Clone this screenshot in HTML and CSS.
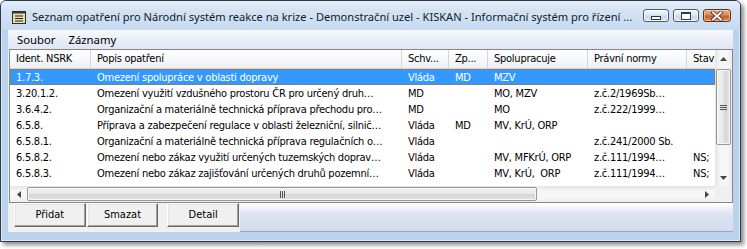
FILE: index.html
```html
<!DOCTYPE html>
<html lang="cs">
<head>
<meta charset="utf-8">
<title>Seznam opatření</title>
<link rel="stylesheet" href="styles.css">
</head>
<body>
<div class="window">
  <div class="titlebar">
    <svg class="appicon" width="16" height="16" viewBox="0 0 16 16">
      <rect x="1.5" y="2.5" width="13" height="12" fill="#e9dfa8" stroke="#2a2a2a"/>
      <rect x="1.5" y="2.5" width="13" height="2" fill="#3a3a3a"/>
      <rect x="4" y="6.5" width="8" height="1" fill="#222"/>
      <rect x="4" y="9" width="8" height="1" fill="#222"/>
      <rect x="4" y="11.5" width="8" height="1" fill="#222"/>
    </svg>
    <div class="title">Seznam opatření pro Národní systém reakce na krize - Demonstrační uzel - KISKAN - Informační systém pro řízení ...</div>
    <div class="capbtns">
      <div class="capbtn"><span class="g-min"></span></div>
      <div class="capbtn"><span class="g-max"></span></div>
      <div class="capbtn close">
        <svg width="14" height="10" viewBox="0 0 14 10">
          <path d="M3 1.5 L11 8.5 M11 1.5 L3 8.5" stroke="#4a2a1c" stroke-width="3.6" stroke-linecap="square"/>
          <path d="M3 1.5 L11 8.5 M11 1.5 L3 8.5" stroke="#ffffff" stroke-width="2" stroke-linecap="square"/>
        </svg>
      </div>
    </div>
  </div>
  <div class="client">
    <div class="menubar"><span class="menu">Soubor</span><span class="menu">Záznamy</span></div>
    <div class="list">
      <div class="view">
        <div class="row header">
          <div class="cell">Ident. NSRK</div>
          <div class="cell">Popis opatření</div>
          <div class="cell">Schv...</div>
          <div class="cell">Zp...</div>
          <div class="cell">Spolupracuje</div>
          <div class="cell">Právní normy</div>
          <div class="cell">Stav</div>
        </div>
        <div class="row sel">
          <div class="cell">1.7.3.</div>
          <div class="cell">Omezení spolupráce v oblasti dopravy</div>
          <div class="cell">Vláda</div>
          <div class="cell">MD</div>
          <div class="cell">MZV</div>
          <div class="cell"></div>
          <div class="cell"></div>
        </div>
        <div class="row">
          <div class="cell">3.20.1.2.</div>
          <div class="cell">Omezení využití vzdušného prostoru ČR pro určený druh…</div>
          <div class="cell">MD</div>
          <div class="cell"></div>
          <div class="cell">MO, MZV</div>
          <div class="cell">z.č.2/1969Sb…</div>
          <div class="cell"></div>
        </div>
        <div class="row">
          <div class="cell">3.6.4.2.</div>
          <div class="cell">Organizační a materiálně technická příprava přechodu pro…</div>
          <div class="cell">MD</div>
          <div class="cell"></div>
          <div class="cell">MO</div>
          <div class="cell">z.č.222/1999…</div>
          <div class="cell"></div>
        </div>
        <div class="row">
          <div class="cell">6.5.8.</div>
          <div class="cell">Příprava a zabezpečení regulace v oblasti železniční, silnič…</div>
          <div class="cell">Vláda</div>
          <div class="cell">MD</div>
          <div class="cell">MV, KrÚ, ORP</div>
          <div class="cell"></div>
          <div class="cell"></div>
        </div>
        <div class="row">
          <div class="cell">6.5.8.1.</div>
          <div class="cell">Organizační a materiálně technická příprava regulačních o…</div>
          <div class="cell">Vláda</div>
          <div class="cell"></div>
          <div class="cell"></div>
          <div class="cell">z.č.241/2000 Sb.</div>
          <div class="cell"></div>
        </div>
        <div class="row">
          <div class="cell">6.5.8.2.</div>
          <div class="cell">Omezení nebo zákaz využití určených tuzemských doprav…</div>
          <div class="cell">Vláda</div>
          <div class="cell"></div>
          <div class="cell">MV, MFKrÚ, ORP</div>
          <div class="cell">z.č.111/1994…</div>
          <div class="cell">NS;</div>
        </div>
        <div class="row">
          <div class="cell">6.5.8.3.</div>
          <div class="cell">Omezení nebo zákaz zajišťování určených druhů pozemní…</div>
          <div class="cell">Vláda</div>
          <div class="cell"></div>
          <div class="cell">MV, KrÚ,&nbsp; ORP</div>
          <div class="cell">z.č.111/1994…</div>
          <div class="cell">NS;</div>
        </div>
      </div>
      <div class="vscroll">
        <div class="arrow"><svg width="7" height="4" viewBox="0 0 7 4"><path d="M0 4 L3.5 0 L7 4 Z" fill="#444"/></svg></div>
        <div class="vtrack">
          <div class="vthumb"><span class="grip-h"></span><span class="grip-h"></span><span class="grip-h"></span></div>
        </div>
        <div class="arrow"><svg width="7" height="4" viewBox="0 0 7 4"><path d="M0 0 L3.5 4 L7 0 Z" fill="#444"/></svg></div>
      </div>
      <div class="hscroll">
        <div class="harrow"><svg width="4" height="7" viewBox="0 0 4 7"><path d="M4 0 L0 3.5 L4 7 Z" fill="#444"/></svg></div>
        <div class="htrack">
          <div class="hthumb"><span class="grip-v"></span><span class="grip-v"></span><span class="grip-v"></span></div>
        </div>
        <div class="harrow"><svg width="4" height="7" viewBox="0 0 4 7"><path d="M0 0 L4 3.5 L0 7 Z" fill="#444"/></svg></div>
      </div>
      <div class="corner"></div>
    </div>
    <div class="bottom">
      <div class="buttons">
        <div class="btn">Přidat</div>
        <div class="btn">Smazat</div>
        <div class="btn gap">Detail</div>
      </div>
      <div class="filler"></div>
    </div>
  </div>
</div>
</body>
</html>
```

FILE: styles.css
```css
* { box-sizing: border-box; }
html, body { margin: 0; padding: 0; background: #ffffff; }
body { width: 747px; height: 249px; overflow: hidden; }

.window {
  width: 741px;
  height: 242px;
  border: 1px solid #2e3a48;
  border-radius: 6px 6px 0 0;
  background: #bad2eb;
  box-shadow: 3px 3px 4px rgba(0,0,0,0.45), inset 0 0 0 1px #dbe8f6;
  padding: 0 7px 9px 7px;
  display: flex;
  flex-direction: column;
}

.titlebar {
  height: 29px;
  margin: 0 -7px;
  padding-left: 10px;
  padding-right: 9px;
  display: flex;
  align-items: center;
  border-radius: 5px 5px 0 0;
  background: linear-gradient(#e4eef9 0, #d3e3f4 35%, #c6daf0 100%);
}
.appicon { flex: none; margin-top: 2px; }
.title {
  margin-left: 5px;
  flex: 1;
  white-space: nowrap;
  overflow: hidden;
  font-family: "Noto Sans", sans-serif;
  font-size: 11.1px;
  color: #101c30;
  padding-top: 1px;
}
.capbtns { display: flex; gap: 4px; align-self: flex-start; margin-top: 8px; }
.capbtn {
  width: 26px;
  height: 13px;
  border: 1px solid #4c5a6c;
  border-radius: 3px;
  background: linear-gradient(#f2f6fb 0, #dde8f4 45%, #c9d9ec 55%, #d6e3f1 100%);
  display: flex;
  align-items: center;
  justify-content: center;
  box-shadow: inset 0 0 0 1px rgba(255,255,255,0.7);
}
.capbtn.close {
  width: 28px;
  border-color: #5a3422;
  background: linear-gradient(#efb48e 0, #dd8a5c 45%, #c45f2c 55%, #d9925e 100%);
  box-shadow: inset 0 0 0 1px rgba(255,220,180,0.6);
}
.g-min {
  width: 10px; height: 4px;
  background: #fff;
  border: 1px solid #2e3a48;
  margin-top: 5px;
}
.g-max {
  width: 10px; height: 8px;
  background: #fff;
  border: 1px solid #2e3a48;
  border-top-width: 2px;
  box-shadow: inset 0 0 0 1px #fff;
}

.client {
  flex: 1;
  display: flex;
  flex-direction: column;
  background: #f0f0f0;
}

.menubar {
  height: 19px;
  display: flex;
  align-items: center;
  padding-left: 3px;
  background: linear-gradient(#f7f9fd 0, #e9eef8 50%, #dfe6f3 100%);
  font-family: "Noto Sans", sans-serif;
  font-size: 11.3px;
  color: #000;
}
.menu { padding: 0 7px 0 6px; }

.list {
  height: 154px;
  margin-left: 1px;
  border: 1px solid #828790;
  background: #ffffff;
  display: grid;
  grid-template-columns: 1fr 17px;
  grid-template-rows: 1fr 16px;
  overflow: hidden;
}
.view {
  overflow: hidden;
  font-family: "DejaVu Sans Condensed", "DejaVu Sans", sans-serif;
  font-stretch: semi-condensed;
  font-size: 11px;
  letter-spacing: -0.25px;
  color: #000;
}
.row {
  display: grid;
  grid-template-columns: 81px 311px 47px 39px 100px 99px 60px;
  height: 16px;
  line-height: 18px;
  white-space: nowrap;
}
.cell { padding-left: 6px; overflow: hidden; }
.row.header {
  height: 19px;
  line-height: 18px;
  background: linear-gradient(#ffffff 0, #f7f8fa 50%, #eef0f3 100%);
  border-bottom: 1px solid #d5d5d5;
}
.row.header .cell { border-right: 1px solid #d5d5d5; }
.row.sel {
  background: #3399ff;
  color: #ffffff;
  outline: 1px dotted #cc6600;
  outline-offset: -1px;
}
.row.sel .cell:first-child { margin-left: 2px; padding-left: 4px; }

.vscroll {
  grid-row: 1;
  grid-column: 2;
  display: flex;
  flex-direction: column;
  background: linear-gradient(90deg, #e4e4e4 0, #f6f6f6 30%, #f6f6f6 70%, #ececec 100%);
}
.arrow { height: 17px; display: flex; align-items: center; justify-content: center; flex: none; }
.vtrack { flex: 1; padding: 2px 1px 0 1px; }
.vthumb {
  height: 76px;
  border: 1px solid #979797;
  border-radius: 2px;
  background: linear-gradient(90deg, #f2f2f2 0, #e6e6e6 50%, #d6d6d6 51%, #e0e0e0 100%);
  box-shadow: inset 0 0 0 1px #f8f8f8;
  display: flex;
  flex-direction: column;
  align-items: center;
  justify-content: center;
  gap: 1px;
}
.grip-h { width: 7px; height: 1px; background: #555; }

.hscroll {
  grid-row: 2;
  grid-column: 1;
  display: flex;
  background: linear-gradient(#e4e4e4 0, #f6f6f6 30%, #f6f6f6 70%, #ececec 100%);
}
.harrow { width: 17px; display: flex; align-items: center; justify-content: center; flex: none; }
.htrack { flex: 1; padding: 1px 0 1px 0; }
.hthumb {
  width: 510px;
  height: 100%;
  border: 1px solid #979797;
  border-radius: 2px;
  background: linear-gradient(#f2f2f2 0, #e6e6e6 50%, #d6d6d6 51%, #e0e0e0 100%);
  box-shadow: inset 0 0 0 1px #f8f8f8;
  display: flex;
  align-items: center;
  justify-content: center;
  gap: 1px;
}
.grip-v { width: 1px; height: 7px; background: #555; }
.corner { grid-row: 2; grid-column: 2; background: #f0f0f0; }

.bottom {
  flex: 1;
  display: flex;
}
.buttons {
  width: 232px;
  background: #f0f0f0;
  display: flex;
  align-items: flex-start;
  padding-left: 6px;
}
.btn {
  width: 72px;
  height: 24px;
  margin-right: 1px;
  background: #f0f0f0;
  border: 1px solid;
  border-color: #ffffff #696969 #696969 #ffffff;
  box-shadow: inset -1px -1px 0 #a0a0a0, inset 1px 1px 0 #e3e3e3;
  font-family: "DejaVu Sans Condensed", "DejaVu Sans", sans-serif;
  font-stretch: semi-condensed;
  font-size: 11px;
  line-height: 22px;
  text-align: center;
  color: #000;
}
.btn.gap { margin-left: 8px; }
.filler {
  flex: 1;
  background: linear-gradient(#ffffff 0, #f3f5fb 15%, #dde4f3 35%, #d3dbee 100%);
  border-bottom: 1px solid #9ea6b4;
}
```
